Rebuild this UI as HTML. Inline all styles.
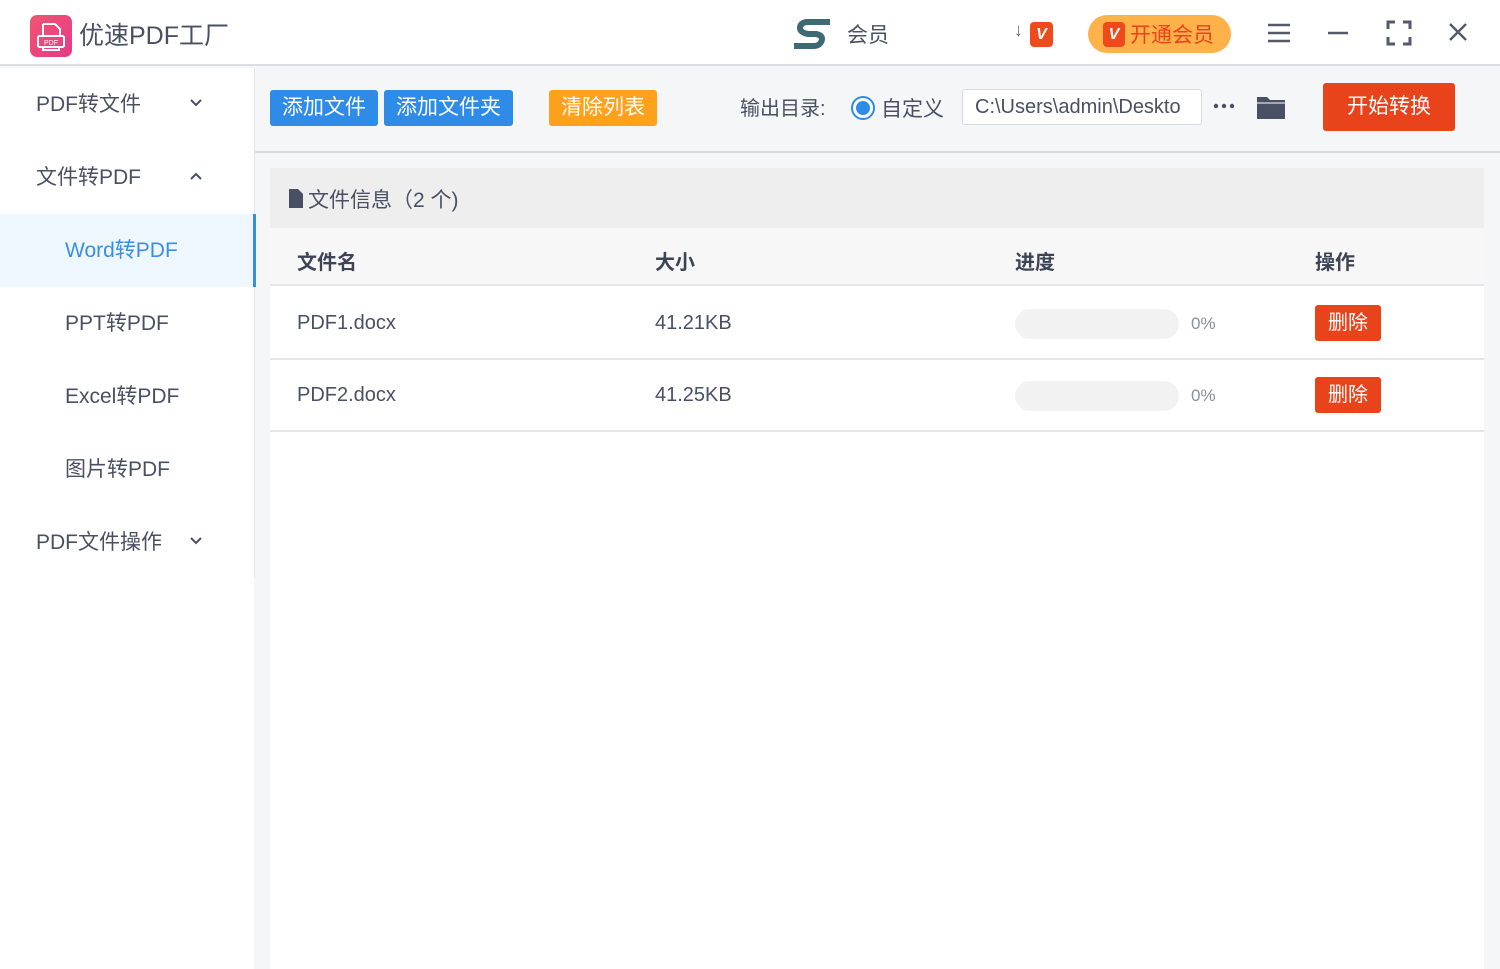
<!DOCTYPE html>
<html><head><meta charset="utf-8"><style>
*{margin:0;padding:0;box-sizing:border-box}
body{width:1500px;height:969px;position:relative;background:#f5f6f8;font-family:"Liberation Sans","Noto Sans CJK SC",sans-serif;color:#4a5063;overflow:hidden}
.a{position:absolute;white-space:nowrap}
.btn{position:absolute;color:#fff;font-size:21px;text-align:center;border-radius:3px}
.nav{position:absolute;left:0;width:254px;height:73px;line-height:73px;font-size:21px;color:#4a5063}
.chev{position:absolute;left:189px;top:30px}
.th{font-size:20px;font-weight:bold;color:#3e4456}
.td{font-size:20px;color:#4a5063}
.bar{position:absolute;left:1015px;width:164px;height:30px;border-radius:15px;background:#f2f2f2}
.pct{font-size:17px;color:#8a8f9c}
.del{position:absolute;left:1315px;width:66px;height:36px;line-height:36px;background:#e8431a;border-radius:3px;color:#fff;font-size:20px;text-align:center}
</style></head><body>
<div class="a" style="left:0;top:0;width:1500px;height:66px;background:#fff;border-bottom:2px solid #dcdde0"></div>
<div class="a" style="left:30px;top:15px;width:42px;height:42px;border-radius:7px;background:linear-gradient(135deg,#f05670,#e53a8a)">
<svg width="42" height="42" viewBox="0 0 42 42"><path d="M13 9h12l5 5v8" fill="none" stroke="#fff" stroke-width="2"/><path d="M13 9v13" stroke="#fff" stroke-width="2"/><rect x="8" y="21" width="26" height="11" rx="1.5" fill="none" stroke="#fff" stroke-width="2"/><text x="21" y="30" font-size="7" fill="#fff" text-anchor="middle" font-family="Liberation Sans">PDF</text><path d="M13 32v3h16v-3" fill="none" stroke="#fff" stroke-width="2"/></svg></div>
<div class="a" style="left:79px;top:16px;font-size:25px;color:#4a5063">优速PDF工厂</div>
<svg class="a" style="left:790px;top:18px" width="44" height="34" viewBox="0 0 44 34"><path d="M40 4H18c-6 0-8 3-8 6s3 5 8 6h8c5 1 6 3 6 5s-2 7-8 7H4" fill="none" stroke="#3d6a73" stroke-width="6"/></svg>
<div class="a" style="left:847px;top:19px;font-size:21px;color:#4a5063">会员</div>
<div class="a" style="left:1014px;top:20px;font-size:18px;color:#666">↓</div>
<div class="a" style="left:1030px;top:22px;width:23px;height:25px;border-radius:4px;background:#ee4a1c;color:#fff;font-size:16px;font-weight:bold;font-style:italic;text-align:center;line-height:25px">V</div>
<div class="a" style="left:1088px;top:15px;width:143px;height:38px;border-radius:19px;background:#ffb24a"></div>
<div class="a" style="left:1103px;top:22px;width:22px;height:25px;border-radius:4px;background:#ee4a1c;color:#fff;font-size:16px;font-weight:bold;font-style:italic;text-align:center;line-height:25px">V</div>
<div class="a" style="left:1130px;top:19px;font-size:21px;color:#e8431a">开通会员</div>
<svg class="a" style="left:1266px;top:22px" width="26" height="22"><path d="M2 3h22M2 11h22M2 19h22" stroke="#555a6a" stroke-width="2.4"/></svg>
<svg class="a" style="left:1327px;top:22px" width="22" height="22"><path d="M1 11h20" stroke="#555a6a" stroke-width="2.4"/></svg>
<svg class="a" style="left:1386px;top:20px" width="26" height="26"><path d="M2 9V2h7M17 2h7v7M24 17v7h-7M9 24H2v-7" fill="none" stroke="#555a6a" stroke-width="3"/></svg>
<svg class="a" style="left:1448px;top:22px" width="20" height="20"><path d="M2 2l16 16M18 2L2 18" stroke="#555a6a" stroke-width="2.4"/></svg>
<div class="a" style="left:0;top:68px;width:254px;height:901px;background:#fff"></div>
<div class="a" style="left:254px;top:68px;width:1px;height:510px;background:#e4e6ea"></div>
<div class="nav" style="top:68px;padding-left:36px">PDF转文件<svg class="chev" width="14" height="10"><path d="M2 2l5 5 5-5" fill="none" stroke="#4a5063" stroke-width="2"/></svg></div>
<div class="nav" style="top:141px;padding-left:36px">文件转PDF<svg class="chev" width="14" height="10"><path d="M2 8l5-5 5 5" fill="none" stroke="#4a5063" stroke-width="2"/></svg></div>
<div class="nav" style="top:214px;padding-left:65px;background:#eef7fd;color:#3a8ee6;border-right:3px solid #3a8ee6;width:256px">Word转PDF</div>
<div class="nav" style="top:287px;padding-left:65px">PPT转PDF</div>
<div class="nav" style="top:360px;padding-left:65px">Excel转PDF</div>
<div class="nav" style="top:433px;padding-left:65px">图片转PDF</div>
<div class="nav" style="top:506px;padding-left:36px">PDF文件操作<svg class="chev" width="14" height="10"><path d="M2 2l5 5 5-5" fill="none" stroke="#4a5063" stroke-width="2"/></svg></div>
<div class="btn" style="left:270px;top:90px;width:108px;height:36px;line-height:36px;background:#2e8ce8">添加文件</div>
<div class="btn" style="left:384px;top:90px;width:129px;height:36px;line-height:36px;background:#2e8ce8">添加文件夹</div>
<div class="btn" style="left:549px;top:90px;width:108px;height:36px;line-height:36px;background:#ffa11a">清除列表</div>
<div class="a" style="left:740px;top:92px;font-size:20px;color:#4a5063">输出目录:</div>
<div class="a" style="left:851px;top:96px;width:24px;height:24px;border-radius:50%;border:2px solid #2e8ce8;background:#fff"><div style="margin:3px;width:14px;height:14px;border-radius:50%;background:#2e8ce8"></div></div>
<div class="a" style="left:881px;top:93px;font-size:21px;color:#4a5063">自定义</div>
<div class="a" style="left:962px;top:89px;width:240px;height:36px;border:1px solid #d8dadf;border-radius:3px;background:#fff;font-size:20px;line-height:34px;padding-left:12px;color:#4a5063;overflow:hidden">C:\Users\admin\Deskto</div>
<svg class="a" style="left:1213px;top:103px" width="24" height="6"><circle cx="3" cy="3" r="2.2" fill="#4a5063"/><circle cx="11" cy="3" r="2.2" fill="#4a5063"/><circle cx="19" cy="3" r="2.2" fill="#4a5063"/></svg>
<svg class="a" style="left:1256px;top:94px" width="30" height="26"><path d="M1 3h10l3 3h15v19H1z" fill="#4a5063"/><path d="M1 9h28" stroke="#fff" stroke-width="1"/></svg>
<div class="btn" style="left:1323px;top:83px;width:132px;height:48px;line-height:48px;background:#e8431a">开始转换</div>
<div class="a" style="left:255px;top:151px;width:1245px;height:2px;background:#d8dadf"></div>
<div class="a" style="left:270px;top:168px;width:1214px;height:801px;background:#fff"></div>
<div class="a" style="left:270px;top:168px;width:1214px;height:60px;background:#eeeeee"></div>
<svg class="a" style="left:289px;top:189px" width="15" height="19"><path d="M0 0h9l5 5v14H0z" fill="#4a5063"/></svg>
<div class="a" style="left:308px;top:184px;font-size:21px;color:#4a5063">文件信息（2 个)</div>
<div class="a" style="left:270px;top:228px;width:1214px;height:58px;background:#f7f7f8;border-bottom:2px solid #e6e6e8"></div>
<div class="a th" style="left:297px;top:246px">文件名</div>
<div class="a th" style="left:655px;top:246px">大小</div>
<div class="a th" style="left:1015px;top:246px">进度</div>
<div class="a th" style="left:1315px;top:246px">操作</div>
<div class="a td" style="left:297px;top:312px">PDF1.docx</div>
<div class="a td" style="left:655px;top:312px">41.21KB</div>
<div class="bar" style="top:309px"></div><div class="a pct" style="left:1191px;top:314px">0%</div>
<div class="del" style="top:305px">删除</div>
<div class="a" style="left:270px;top:358px;width:1214px;height:2px;background:#e6e6e8"></div>
<div class="a td" style="left:297px;top:384px">PDF2.docx</div>
<div class="a td" style="left:655px;top:384px">41.25KB</div>
<div class="bar" style="top:381px"></div><div class="a pct" style="left:1191px;top:386px">0%</div>
<div class="del" style="top:377px">删除</div>
<div class="a" style="left:270px;top:430px;width:1214px;height:2px;background:#e6e6e8"></div>
</body></html>
